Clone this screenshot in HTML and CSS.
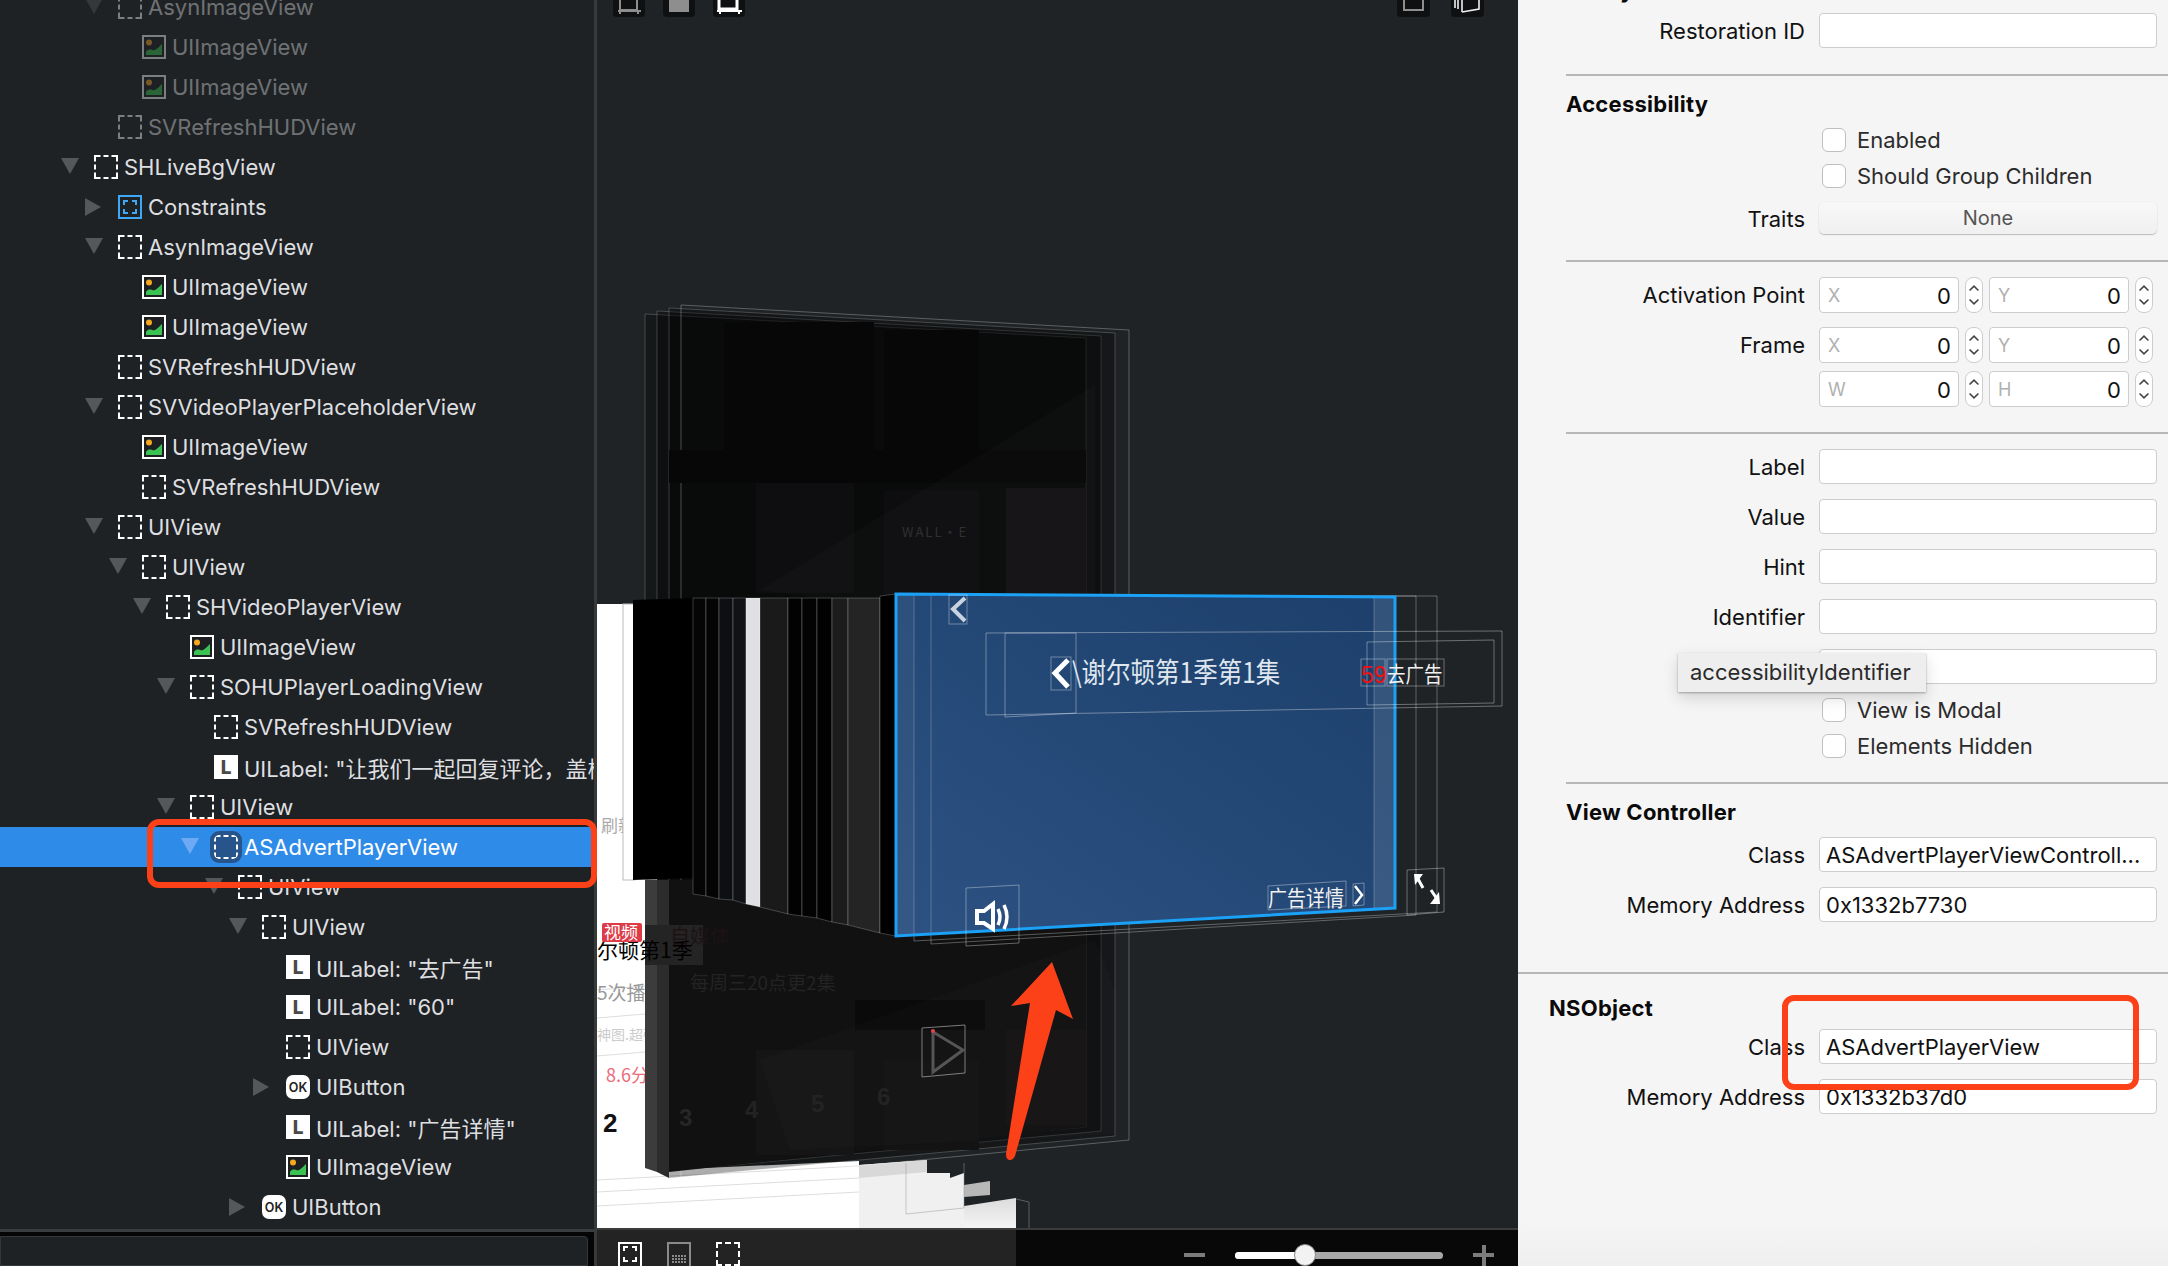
FILE: index.html
```html
<!DOCTYPE html>
<html lang="en">
<head>
    <meta charset="UTF-8">
    <title>View Debugger</title>
    <link rel="stylesheet" href="styles.css">
</head>
<body>
    <svg class="defs">
        <symbol id="i-view" viewBox="0 0 24 24">
            <path d="M1 6.5V1H6.5M9.5 1h5M17.5 1H23V6.5M23 9.5v5M23 17.5V23H17.5M14.5 23h-5M6.5 23H1V17.5M1 14.5v-5" fill="none" stroke="#fff" stroke-width="2"/>
        </symbol>
        <symbol id="i-constraints" viewBox="0 0 24 24">
            <rect x="1" y="1" width="22" height="22" fill="none" stroke="#3fa7f7" stroke-width="2"/>
            <path d="M6 10V6H10M14 6H18V10M18 14V18H14M10 18H6V14" fill="none" stroke="#3fa7f7" stroke-width="2"/>
        </symbol>
        <symbol id="i-image" viewBox="0 0 24 24">
            <rect x="1" y="1" width="22" height="22" fill="#1c2022" stroke="#fff" stroke-width="2"/>
            <circle cx="7" cy="7.5" r="3" fill="#f5a623"/>
            <path d="M4 20V17C7 12 10 16 13 15C15 14 17 12 20 9V20Z" fill="#3cc153"/>
        </symbol>
    </svg>

    <div class="app">
        <aside class="tree-panel">
            <div class="tree">
                <div class="row lv-1 dim"><i class="tri down"></i><svg class="ic"><use href="#i-view"/></svg><span>AsynImageView</span></div>
                <div class="row lv-2 dim"><i class="tri"></i><svg class="ic"><use href="#i-image"/></svg><span>UIImageView</span></div>
                <div class="row lv-2 dim"><i class="tri"></i><svg class="ic"><use href="#i-image"/></svg><span>UIImageView</span></div>
                <div class="row lv-1 dim"><i class="tri"></i><svg class="ic"><use href="#i-view"/></svg><span>SVRefreshHUDView</span></div>
                <div class="row lv-0"><i class="tri down"></i><svg class="ic"><use href="#i-view"/></svg><span>SHLiveBgView</span></div>
                <div class="row lv-1"><i class="tri right"></i><svg class="ic"><use href="#i-constraints"/></svg><span>Constraints</span></div>
                <div class="row lv-1"><i class="tri down"></i><svg class="ic"><use href="#i-view"/></svg><span>AsynImageView</span></div>
                <div class="row lv-2"><i class="tri"></i><svg class="ic"><use href="#i-image"/></svg><span>UIImageView</span></div>
                <div class="row lv-2"><i class="tri"></i><svg class="ic"><use href="#i-image"/></svg><span>UIImageView</span></div>
                <div class="row lv-1"><i class="tri"></i><svg class="ic"><use href="#i-view"/></svg><span>SVRefreshHUDView</span></div>
                <div class="row lv-1"><i class="tri down"></i><svg class="ic"><use href="#i-view"/></svg><span>SVVideoPlayerPlaceholderView</span></div>
                <div class="row lv-2"><i class="tri"></i><svg class="ic"><use href="#i-image"/></svg><span>UIImageView</span></div>
                <div class="row lv-2"><i class="tri"></i><svg class="ic"><use href="#i-view"/></svg><span>SVRefreshHUDView</span></div>
                <div class="row lv-1"><i class="tri down"></i><svg class="ic"><use href="#i-view"/></svg><span>UIView</span></div>
                <div class="row lv-2"><i class="tri down"></i><svg class="ic"><use href="#i-view"/></svg><span>UIView</span></div>
                <div class="row lv-3"><i class="tri down"></i><svg class="ic"><use href="#i-view"/></svg><span>SHVideoPlayerView</span></div>
                <div class="row lv-4"><i class="tri"></i><svg class="ic"><use href="#i-image"/></svg><span>UIImageView</span></div>
                <div class="row lv-4"><i class="tri down"></i><svg class="ic"><use href="#i-view"/></svg><span>SOHUPlayerLoadingView</span></div>
                <div class="row lv-5"><i class="tri"></i><svg class="ic"><use href="#i-view"/></svg><span>SVRefreshHUDView</span></div>
                <div class="row lv-5"><i class="tri"></i><b class="ic label-ic">L</b><span>UILabel: "让我们一起回复评论，盖楼"</span></div>
                <div class="row lv-4"><i class="tri down"></i><svg class="ic"><use href="#i-view"/></svg><span>UIView</span></div>
                <div class="row lv-5 selected"><i class="tri down"></i><svg class="ic"><use href="#i-view"/></svg><span>ASAdvertPlayerView</span></div>
                <div class="row lv-6"><i class="tri down"></i><svg class="ic"><use href="#i-view"/></svg><span>UIView</span></div>
                <div class="row lv-7"><i class="tri down"></i><svg class="ic"><use href="#i-view"/></svg><span>UIView</span></div>
                <div class="row lv-8"><i class="tri"></i><b class="ic label-ic">L</b><span>UILabel: "去广告"</span></div>
                <div class="row lv-8"><i class="tri"></i><b class="ic label-ic">L</b><span>UILabel: "60"</span></div>
                <div class="row lv-8"><i class="tri"></i><svg class="ic"><use href="#i-view"/></svg><span>UIView</span></div>
                <div class="row lv-8"><i class="tri right"></i><b class="ic ok-ic">OK</b><span>UIButton</span></div>
                <div class="row lv-8"><i class="tri"></i><b class="ic label-ic">L</b><span>UILabel: "广告详情"</span></div>
                <div class="row lv-8"><i class="tri"></i><svg class="ic"><use href="#i-image"/></svg><span>UIImageView</span></div>
                <div class="row lv-7"><i class="tri right"></i><b class="ic ok-ic">OK</b><span>UIButton</span></div>
            </div>
            <div class="tree-footer"><div class="filter"></div></div>
        </aside>

        <main class="canvas">
            <svg class="stage" viewBox="597 0 921 1228">
                <defs>
                    <linearGradient id="blueFill" x1="1" y1="0" x2="0" y2="1">
                        <stop offset="0" stop-color="#1c3f6b"/>
                        <stop offset="1" stop-color="#2d5282"/>
                    </linearGradient>
                    <linearGradient id="stair" x1="0" y1="0" x2="0" y2="1">
                        <stop offset="0" stop-color="#dcdcdc"/>
                        <stop offset="1" stop-color="#f4f4f4"/>
                    </linearGradient>
                </defs>

                <!-- white page behind everything -->
                <rect x="597" y="604" width="60" height="624" fill="#fff"/>
                <polygon points="597,1173 859,1161 859,1228 597,1228" fill="#fff"/>
                <path d="M597 1180L859 1166M597 1192L859 1178M597 1206L859 1192M597 990L645 986M597 1018L645 1014M597 1056L645 1052" stroke="#ddd" fill="none"/>
                <polygon points="859,1165 927,1160 927,1173 950,1173 950,1178 964,1173 964,1228 859,1228" fill="#f0f0f0"/>
                <polygon points="859,1165 927,1160 927,1172 859,1178" fill="#d8d8d8"/>
                <polygon points="964,1185 990,1181 990,1195 964,1197" fill="#b8b8b8"/>
                <polygon points="964,1206 1016,1198 1016,1228 964,1228" fill="url(#stair)"/>
                <path d="M906 1163V1214L964 1208V1163M1016 1199L1029 1202V1228" stroke="#999" fill="none" opacity=".5"/>

                <text class="t-cjk" x="601" y="832" font-size="17" fill="#aaa">刷新</text>
                <text class="t-cjk" x="597" y="1000" font-size="19" fill="#999">5次播放</text>
                <text class="t-cjk" x="597" y="1040" font-size="14" fill="#ccc">神图.超强</text>
                <text class="t-cjk" x="606" y="1082" font-size="18" fill="#ee6a7a">8.6分</text>
                <text class="t-bold" x="603" y="1132" font-size="26" fill="#111">2</text>

                <!-- poster planes, back layers -->
                <polygon points="645,314 1086,338 1086,1127 645,1168" fill="#000" fill-opacity=".32" stroke="#fff" stroke-opacity=".2"/>
                <polygon points="657,311 1101,336 1101,1131 657,1172" fill="#000" fill-opacity=".32" stroke="#fff" stroke-opacity=".2"/>
                <polygon points="669,308 1115,333 1115,1136 669,1178" fill="#000" fill-opacity=".32" stroke="#fff" stroke-opacity=".2"/>
                <polygon points="681,305 1129,330 1129,1140 681,1183" fill="none" stroke="#fff" stroke-opacity=".28"/>
                <polygon points="645,880 657,880 657,1172 645,1168" fill="#3c3c3c"/>
                <polygon points="657,880 669,880 669,1178 657,1172" fill="#2c2c2c"/>
                <polygon points="669,880 1086,880 1086,1127 669,1172" fill="#111112"/>

                <rect x="724" y="322" width="150" height="130" fill="#070708"/>
                <rect x="884" y="330" width="95" height="125" fill="#070708"/>
                <rect x="669" y="450" width="417" height="33" fill="#070708"/>
                <rect x="756" y="483" width="98" height="110" fill="#0e0e10"/>
                <rect x="884" y="490" width="95" height="105" fill="#0d0d0f"/>
                <rect x="1006" y="488" width="80" height="110" fill="#131113"/>
                <polygon points="1095,385 1095,600 830,600 760,590" fill="#fff" fill-opacity=".02"/>
                <rect x="855" y="1000" width="130" height="30" fill="#0a0a0a"/>
                <rect x="756" y="1050" width="98" height="105" fill="#151516"/>
                <rect x="884" y="1060" width="95" height="90" fill="#131314"/>
                <rect x="1006" y="1030" width="80" height="95" fill="#161315"/>
                <polygon points="1095,940 1115,990 1115,1134 790,1150 760,1060" fill="#fff" fill-opacity=".015"/>
                <text class="t-cjk" x="902" y="537" font-size="13" fill="#303032" letter-spacing="2">WALL·E</text>

                <rect x="645" y="925" width="58" height="40" fill="#242424"/>
                <text class="t-cjk" x="670" y="944" font-size="20" fill="#1d1214">自媒体</text>
                <text class="t-cjk" x="597" y="958" font-size="21" fill="#000">尔顿第1季</text>
                <rect x="602" y="923" width="40" height="19" rx="2" fill="#dd3b47"/>
                <text class="t-cjk" x="604" y="939" font-size="17" fill="#fff">视频</text>
                <text class="t-cjk" x="690" y="990" font-size="19" fill="#232324">每周三20点更2集</text>
                <text class="t-bold" x="679" y="1126" font-size="24" fill="#262626">3</text>
                <text class="t-bold" x="745" y="1118" font-size="24" fill="#232323">4</text>
                <text class="t-bold" x="811" y="1112" font-size="24" fill="#232323">5</text>
                <text class="t-bold" x="877" y="1105" font-size="24" fill="#232323">6</text>

                <!-- play button plane -->
                <polygon points="922,1028 965,1025 965,1073 922,1077" fill="none" stroke="#aaa" stroke-opacity=".7"/>
                <path d="M933 1032L963 1050L933 1072Z" fill="none" stroke="#555" stroke-width="3"/>
                <circle cx="933" cy="1031" r="2" fill="#e4444c"/>

                <!-- slices -->
                <rect x="623" y="604" width="12" height="276" fill="#fff" stroke="#bbb"/>
                <polygon points="633,600 693,598 693,878 633,880" fill="#000"/>
                <g stroke="#fff" stroke-opacity=".22">
                    <polygon points="693,598 706,598 706,896 693,894" fill="#050505"/>
                    <polygon points="706,598 719,598 719,899 706,896" fill="#040404"/>
                    <polygon points="719,598 733,598 733,900 719,899" fill="#0e0f12"/>
                    <polygon points="733,598 746,598 746,904 733,900" fill="#111215"/>
                    <polygon points="746,598 760,598 760,907 746,904" fill="#dfdfe4"/>
                    <polygon points="760,598 788,598 788,914 760,907" fill="#1a1a1a"/>
                    <polygon points="788,598 802,598 802,916 788,914" fill="#020202"/>
                    <polygon points="802,598 817,598 817,918 802,916" fill="#030303"/>
                    <polygon points="817,598 832,598 832,922 817,918" fill="#020202"/>
                    <polygon points="832,598 848,598 848,925 832,922" fill="#1c1c1c"/>
                    <polygon points="848,598 880,598 880,933 848,925" fill="#242424"/>
                    <polygon points="880,596 896,594 896,936 880,933" fill="#000"/>
                </g>

                <!-- outlines around selection -->
                <polygon points="914,596 1437,596 1437,912 914,941" fill="none" stroke="#fff" stroke-opacity=".3"/>
                <polygon points="931,596 1416,596 1416,915 931,944" fill="none" stroke="#fff" stroke-opacity=".3"/>

                <!-- selected view -->
                <polygon points="896,594 1395,597 1395,908 896,936" fill="url(#blueFill)"/>
                <polygon points="1374,597 1395,597 1395,908 1374,910" fill="#fff" fill-opacity=".1"/>
                <polygon points="896,594 914,594 914,935 896,936" fill="#fff" fill-opacity=".04"/>
                <path d="M914 595V935M931 595V934M1374 597V910" stroke="#fff" stroke-opacity=".22" fill="none"/>
                <polygon points="896,594 1395,597 1395,908 896,936" fill="none" stroke="#1ba1f6" stroke-width="3"/>

                <g fill="none" stroke="#fff" stroke-opacity=".35">
                    <polygon points="986,633 1502,631 1502,706 986,715"/>
                    <polygon points="1005,633 1076,633 1076,713 1005,717"/>
                    <polygon points="1367,642 1494,640 1494,703 1367,705"/>
                    <rect x="949" y="595" width="18" height="29"/>
                    <rect x="1051" y="657" width="20" height="33"/>
                    <rect x="1361" y="659" width="24" height="27"/>
                    <rect x="1387" y="659" width="57" height="27"/>
                    <polygon points="966,888 1019,885 1019,943 966,946"/>
                    <polygon points="1268,886 1346,881 1346,906 1268,910"/>
                    <polygon points="1353,884 1364,883 1364,905 1353,906"/>
                    <polygon points="1407,870 1444,868 1444,912 1407,915"/>
                </g>

                <path d="M965 598L953 609L965 621" fill="none" stroke="#c8d3e0" stroke-width="4"/>
                <path d="M1068 660L1055 673L1068 687" fill="none" stroke="#fff" stroke-width="5"/>
                <text class="t-cjk" transform="translate(1072 683) scale(1 1.15)" font-size="24.5" fill="#dfe6ee">\谢尔顿第1季第1集</text>
                <text class="t-sans" x="1361" y="683" font-size="23" fill="#f01010">59</text>
                <text class="t-cjk" transform="translate(1387 682) scale(1 1.15)" font-size="18.5" fill="#f2f2f2">去广告</text>
                <text class="t-cjk" transform="translate(1268 906) scale(1 1.15)" font-size="19" fill="#f2f2f2">广告详情</text>
                <path d="M1355 886L1362 895L1355 904" fill="none" stroke="#fff" stroke-width="2.5"/>

                <!-- speaker -->
                <path d="M977 911H984L993 904V929L984 923H977Z" fill="none" stroke="#fff" stroke-width="4"/>
                <path d="M998 909Q1002 917 998 925M1004 905Q1010 917 1004 929" fill="none" stroke="#fff" stroke-width="3.5"/>
                <!-- fullscreen -->
                <path d="M1417 877L1423 888M1437 899L1431 890" fill="none" stroke="#fff" stroke-width="3"/>
                <path d="M1414 874H1423L1415 885ZM1440 904H1430L1439 892Z" fill="#fff"/>

                <!-- segment buttons at the top -->
                <g fill="#0e1012">
                    <path d="M613 0H645V13Q645 17 641 17H617Q613 17 613 13Z"/>
                    <path d="M663 0H695V13Q695 17 691 17H667Q663 17 663 13Z"/>
                    <path d="M713 0H745V13Q745 17 741 17H717Q713 17 713 13Z"/>
                    <path d="M1397 0H1430V13Q1430 17 1426 17H1401Q1397 17 1397 13Z"/>
                    <path d="M1451 0H1484V13Q1484 17 1480 17H1455Q1451 17 1451 13Z"/>
                </g>
                <path d="M620 0V10H637V0" fill="none" stroke="#8e8e8e" stroke-width="2"/>
                <path d="M618 11H641M620 11V14M638 11V14" fill="none" stroke="#8e8e8e" stroke-width="2"/>
                <rect x="669" y="0" width="20" height="12" fill="#8e8e8e"/>
                <path d="M719 0V9H737V0" fill="none" stroke="#fff" stroke-width="3"/>
                <path d="M717 11H742M720 11V14M739 11V14" fill="none" stroke="#fff" stroke-width="2"/>
                <path d="M1404 0V10H1423V0" fill="none" stroke="#8e8e8e" stroke-width="2"/>
                <path d="M1455 0V8M1458 0V9M1462 0V12M1462 12L1479 9V0" fill="none" stroke="#eee" stroke-width="1.6"/>
            </svg>

            <div class="view-bar">
                <svg class="bar-ic" viewBox="0 0 24 26">
                    <rect x="1" y="1" width="22" height="26" fill="none" stroke="#fff" stroke-width="2"/>
                    <path d="M6 9V5H10M14 5H18V9M18 15V19H14M10 19H6V15" fill="none" stroke="#fff" stroke-width="2"/>
                </svg>
                <svg class="bar-ic" viewBox="0 0 24 26">
                    <rect x="1" y="1" width="22" height="26" fill="none" stroke="#8a8a8a" stroke-width="2"/>
                    <path d="M5 14h14M5 17h14M5 20h14" stroke="#8a8a8a" stroke-width="2" stroke-dasharray="2 1"/>
                </svg>
                <svg class="bar-ic" viewBox="0 0 24 26">
                    <path d="M1 6V1H6M9 1h6M18 1H23V6M23 9v6M23 18V23H18M15 23H9M6 23H1V18M1 15V9" fill="none" stroke="#fff" stroke-width="2"/>
                </svg>
                <div class="zoom">
                    <span class="zoom-minus"></span>
                    <div class="slider"><span class="slider-fill"></span><span class="knob"></span></div>
                    <span class="zoom-plus"></span>
                </div>
            </div>
        </main>

        <aside class="inspector">
            <section class="group first">
                <h3 class="identity">Identity</h3>
                <div class="field"><label>Restoration ID</label><div class="input"></div></div>
            </section>
            <section class="group access">
                <h3>Accessibility</h3>
                <div class="check"><i></i><span>Enabled</span></div>
                <div class="check"><i></i><span>Should Group Children</span></div>
                <div class="field traits"><label>Traits</label><div class="button">None</div></div>
            </section>
            <section class="group points">
                <div class="field"><label>Activation Point</label>
                    <div class="pair">
                        <div class="num"><em>X</em>0</div><div class="stepper"><svg viewBox="0 0 18 36"><path d="M4 13L9 8L14 13M4 23L9 28L14 23"/></svg></div>
                        <div class="num"><em>Y</em>0</div><div class="stepper"><svg viewBox="0 0 18 36"><path d="M4 13L9 8L14 13M4 23L9 28L14 23"/></svg></div>
                    </div>
                </div>
                <div class="field tight"><label>Frame</label>
                    <div class="pair">
                        <div class="num"><em>X</em>0</div><div class="stepper"><svg viewBox="0 0 18 36"><path d="M4 13L9 8L14 13M4 23L9 28L14 23"/></svg></div>
                        <div class="num"><em>Y</em>0</div><div class="stepper"><svg viewBox="0 0 18 36"><path d="M4 13L9 8L14 13M4 23L9 28L14 23"/></svg></div>
                    </div>
                </div>
                <div class="field"><label></label>
                    <div class="pair">
                        <div class="num"><em>W</em>0</div><div class="stepper"><svg viewBox="0 0 18 36"><path d="M4 13L9 8L14 13M4 23L9 28L14 23"/></svg></div>
                        <div class="num"><em>H</em>0</div><div class="stepper"><svg viewBox="0 0 18 36"><path d="M4 13L9 8L14 13M4 23L9 28L14 23"/></svg></div>
                    </div>
                </div>
            </section>
            <section class="group texts">
                <div class="field"><label>Label</label><div class="input"></div></div>
                <div class="field"><label>Value</label><div class="input"></div></div>
                <div class="field"><label>Hint</label><div class="input"></div></div>
                <div class="field"><label>Identifier</label><div class="input"></div></div>
                <div class="field short"><label></label><div class="input"></div></div>
                <div class="check"><i></i><span>View is Modal</span></div>
                <div class="check"><i></i><span>Elements Hidden</span></div>
            </section>
            <section class="group controller">
                <h3>View Controller</h3>
                <div class="field"><label>Class</label><div class="input">ASAdvertPlayerViewControll...</div></div>
                <div class="field"><label>Memory Address</label><div class="input">0x1332b7730</div></div>
            </section>
            <section class="group nsobject">
                <h3>NSObject</h3>
                <div class="field"><label>Class</label><div class="input">ASAdvertPlayerView</div></div>
                <div class="field"><label>Memory Address</label><div class="input">0x1332b37d0</div></div>
            </section>
        </aside>

        <!-- things that lie over the panels -->
        <div class="tooltip">accessibilityIdentifier</div>
        <div class="mark mark-row"></div>
        <div class="mark mark-class"></div>
        <svg class="arrow" viewBox="0 0 70 200"><path d="M48 0L69 57L52 48L11 194Q9 198 6 198Q2 198 2 192L26 41L7 44Z" fill="#fc4119"/></svg>
    </div>
</body>
</html>
```

FILE: styles.css
```css
* {
    box-sizing: border-box;
}
html, body {
    margin: 0;
    height: 100%;
    overflow: hidden;
}
body {
    font-family: Inter, "Noto Sans CJK SC", sans-serif;
    font-size: 22px;
    background: #1f2325;
}
.defs {
    display: none;
}
.app {
    position: relative;
    display: grid;
    grid-template-columns: 597px 921px 650px;
    width: 2168px;
    height: 1266px;
    overflow: hidden;
}

/* outline tree */
.tree-panel {
    display: flex;
    flex-direction: column;
    height: 1266px;
    background: #1e2224;
    border-right: 3px solid #37393b;
    overflow: hidden;
}
.tree {
    flex: none;
    height: 1242px;
    margin-top: -13px;
    overflow: hidden;
}
.row {
    display: flex;
    align-items: center;
    height: 40px;
    color: #dedfe0;
    white-space: nowrap;
}
.row.dim {
    opacity: .42;
}
.lv-0 { padding-left: 61px; }
.lv-1 { padding-left: 85px; }
.lv-2 { padding-left: 109px; }
.lv-3 { padding-left: 133px; }
.lv-4 { padding-left: 157px; }
.lv-5 { padding-left: 181px; }
.lv-6 { padding-left: 205px; }
.lv-7 { padding-left: 229px; }
.lv-8 { padding-left: 253px; }

.tri {
    flex: none;
    display: block;
    width: 33px;
    height: 18px;
}
.tri.down::before {
    content: "";
    display: block;
    width: 0;
    height: 0;
    border-left: 9px solid transparent;
    border-right: 9px solid transparent;
    border-top: 16px solid #54585a;
}
.tri.right::before {
    content: "";
    display: block;
    width: 0;
    height: 0;
    border-top: 9px solid transparent;
    border-bottom: 9px solid transparent;
    border-left: 16px solid #54585a;
}
.ic {
    flex: none;
    width: 24px;
    height: 24px;
    margin-right: 6px;
}
.label-ic {
    display: flex;
    align-items: center;
    justify-content: center;
    background: #fff;
    color: #4a4a4a;
    font-size: 19px;
    font-weight: 800;
}
.ok-ic {
    display: flex;
    align-items: center;
    justify-content: center;
    background: #fff;
    border-radius: 7px;
    color: #222;
    font-size: 12.5px;
    font-weight: 600;
}
.row.selected {
    background: #2f8be8;
    color: #fff;
}
.row.selected .tri.down::before {
    border-top-color: #6eaaf3;
}
.row.selected .ic {
    background: #27548a;
    border-radius: 5px;
    outline: 4px solid #27548a;
}
.tree-footer {
    flex: 1;
    border-top: 3px solid #3a3c3e;
    background: #050505;
    padding-top: 4px;
}
.filter {
    height: 100%;
    width: 588px;
    background: #1f2224;
    border: 1px solid #34373a;
    border-radius: 0 4px 0 0;
}

/* 3d canvas */
.canvas {
    display: flex;
    flex-direction: column;
    background: #1f2325;
    overflow: hidden;
}
.stage {
    display: block;
    flex: none;
    width: 921px;
    height: 1228px;
}
.t-cjk {
    font-family: "Noto Sans CJK SC", sans-serif;
}
.t-sans {
    font-family: "Liberation Sans", sans-serif;
}
.t-bold {
    font-family: "Liberation Sans", sans-serif;
    font-weight: 700;
}
.view-bar {
    flex: 1;
    display: flex;
    align-items: flex-start;
    gap: 25px;
    padding: 12px 24px 0 21px;
    border-top: 2px solid #3b3b3b;
    background: linear-gradient(to right, #232323 0, #232323 419px, #080808 419px);
    overflow: hidden;
}
.bar-ic {
    flex: none;
    width: 24px;
    height: 26px;
}
.zoom {
    display: flex;
    align-items: center;
    margin-left: auto;
    height: 26px;
}
.zoom-minus {
    width: 21px;
    height: 4px;
    background: #7c7c7c;
}
.slider {
    position: relative;
    width: 208px;
    height: 7px;
    margin: 0 30px;
    background: #a9a9a9;
    border-radius: 4px;
}
.slider-fill {
    display: block;
    width: 70px;
    height: 100%;
    background: #fff;
    border-radius: 4px 0 0 4px;
}
.knob {
    position: absolute;
    left: 59px;
    top: -8px;
    width: 22px;
    height: 22px;
    background: #f2f2f2;
    border: 1px solid #8a8a8a;
    border-radius: 50%;
}
.zoom-plus {
    width: 21px;
    height: 21px;
    background:
        linear-gradient(#7c7c7c, #7c7c7c) center / 100% 4px no-repeat,
        linear-gradient(#7c7c7c, #7c7c7c) center / 4px 100% no-repeat;
}

/* inspector */
.inspector {
    height: 1266px;
    background: linear-gradient(to bottom, #f5f5f5 1220px, #efefef 1266px);
    color: #111;
    overflow: hidden;
}
.group {
    margin-left: 48px;
    padding-right: 11px;
    border-bottom: 2px solid #b6b6b6;
}
.group h3 {
    margin: 0;
    height: 28px;
    line-height: 28px;
    font-size: 22px;
    font-weight: 700;
    letter-spacing: .25px;
    color: #0a0a0a;
}
.field {
    display: flex;
    align-items: center;
    height: 35px;
    margin-bottom: 15px;
}
.field label {
    flex: none;
    width: 239px;
    margin-right: 14px;
    padding-top: 1px;
    text-align: right;
}
.input {
    flex: 1;
    height: 35px;
    line-height: 35px;
    padding-left: 6px;
    background: #fff;
    border: 1px solid #cdcdcd;
    border-radius: 4px;
    white-space: nowrap;
    overflow: hidden;
}
.check {
    display: flex;
    align-items: center;
    height: 24px;
    margin-bottom: 12px;
    padding-left: 256px;
    color: #2c2c2c;
}
.check i {
    flex: none;
    width: 24px;
    height: 24px;
    margin-right: 11px;
    background: #fff;
    border: 1px solid #bfbfbf;
    border-radius: 6px;
}
.button {
    flex: 1;
    height: 32px;
    line-height: 33px;
    text-align: center;
    color: #555;
    font-size: 20px;
    background: linear-gradient(#f8f8f8, #f0f0f0);
    border-radius: 5px;
    box-shadow: 0 1px 1px #bbb, 0 0 1px #ccc;
}
.pair {
    flex: 1;
    display: grid;
    grid-template-columns: 140px 18px 140px 18px;
    column-gap: 6px;
    height: 36px;
}
.num {
    position: relative;
    height: 36px;
    line-height: 36px;
    padding-right: 7px;
    text-align: right;
    background: #fff;
    border: 1px solid #cdcdcd;
    border-radius: 4px;
}
.num em {
    position: absolute;
    left: 8px;
    top: 0;
    font-style: normal;
    font-size: 18px;
    color: #b0b0b0;
}
.stepper {
    height: 36px;
    background: #fff;
    border: 1px solid #cdcdcd;
    border-radius: 8px;
}
.stepper svg {
    display: block;
    width: 100%;
    height: 100%;
    fill: none;
    stroke: #444;
    stroke-width: 1.8;
}

.group.first {
    height: 100px;
    margin-top: -24px;
}
.identity {
    margin-left: -17px !important;
    margin-bottom: 9px !important;
}
.access {
    height: 186px;
    padding-top: 14px;
}
.access h3 {
    margin-bottom: 10px;
}
.traits {
    height: 32px;
    margin-top: 14px;
}
.points {
    height: 172px;
    padding-top: 15px;
}
.points .tight {
    margin-bottom: 9px;
}
.texts {
    height: 350px;
    padding-top: 15px;
}
.texts .short {
    margin-bottom: 14px;
}
.controller {
    height: 190px;
    margin-left: 0;
    padding-left: 48px;
    padding-top: 14px;
}
.controller h3 {
    margin-bottom: 11px;
}
.nsobject {
    border-bottom: none;
    margin-left: 31px;
    padding-top: 20px;
}
.nsobject h3 {
    margin-bottom: 7px;
}
.nsobject .field label {
    width: 256px;
}

/* overlays */
.tooltip {
    position: absolute;
    left: 1678px;
    top: 653px;
    width: 248px;
    height: 39px;
    line-height: 38px;
    padding-left: 12px;
    background: #eeeeee;
    color: #2a2a2a;
    box-shadow: 0 1px 2px rgba(0,0,0,.3), 0 6px 16px rgba(0,0,0,.14);
}
.mark {
    position: absolute;
    border: 6px solid #fc4119;
    border-radius: 12px;
}
.mark-row {
    left: 147px;
    top: 819px;
    width: 450px;
    height: 69px;
}
.mark-class {
    left: 1782px;
    top: 995px;
    width: 357px;
    height: 95px;
}
.arrow {
    position: absolute;
    left: 1004px;
    top: 962px;
    width: 70px;
    height: 200px;
}
```
